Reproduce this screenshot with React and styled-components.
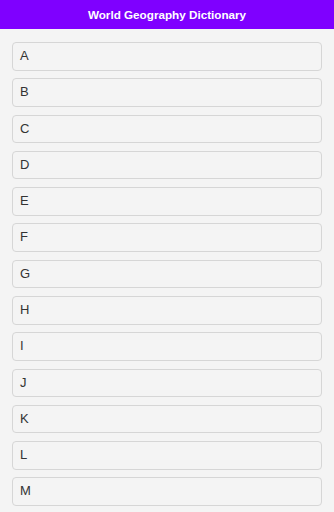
import React from 'react'
import styled, { createGlobalStyle } from 'styled-components'

const letters = 'ABCDEFGHIJKLMNOPQRSTUVWXYZ'.split('')

export default function App() {
	return (
		<>
			<GlobalStyle />
			<Header>
				<Title>World Geography Dictionary</Title>
			</Header>
			<List>
				{letters.map((letter) => (
					<LetterItem key={letter}>{letter}</LetterItem>
				))}
			</List>
		</>
	)
}

const GlobalStyle = createGlobalStyle`
  html, body {
    margin: 0;
    padding: 0;
    background: #f4f4f4;
    font-family: "Liberation Sans", Arial, sans-serif;
  }
`

const Header = styled.header`
  background: #7f00ff;
  color: #fff;
  padding: 8px 10px;
  text-align: center;
`

const Title = styled.h1`
  margin: 0;
  font-size: 11.7px;
  font-weight: bold;
  line-height: 13px;
`

const List = styled.ul`
  list-style: none;
  margin: 0;
  padding: 13px 12px 4px;
  display: flex;
  flex-direction: column;
  gap: 7.7px;
`

const LetterItem = styled.li`
  background: #f4f4f4;
  border: 1px solid #d6d6d6;
  border-radius: 4px;
  padding: 6px 7px 6px 7px;
  font-size: 13px;
  line-height: 14.6px;
  color: #333;
  cursor: pointer;
`
